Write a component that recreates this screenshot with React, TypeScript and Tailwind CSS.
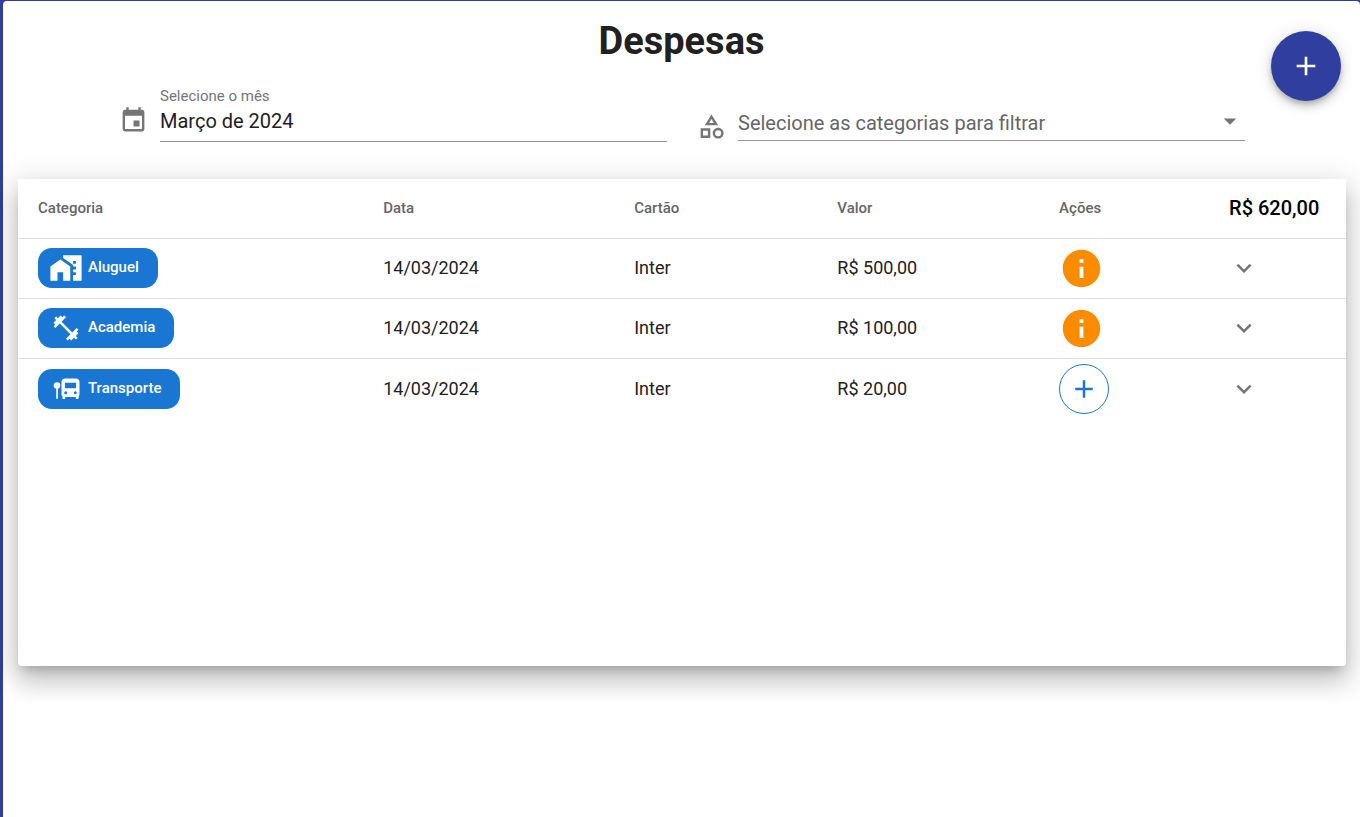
import { useState } from 'react';
import type { ComponentType } from 'react';
import {
  MdAdd,
  MdArrowDropDown,
  MdEvent,
  MdExpandMore,
  MdFitnessCenter,
  MdHomeWork,
  MdInfo,
  MdOutlineCategory,
} from 'react-icons/md';

type IconProps = { className?: string };

function BusStopIcon({ className }: IconProps) {
  return (
    <svg viewBox="0 0 28 28" fill="currentColor" className={className} aria-hidden="true">
      <circle cx="5" cy="10.6" r="3.3" />
      <path d="M4.2 12h1.700v11.800H4.200z" />
      <path
        fillRule="evenodd"
        d="M13.200 3.400h10.600c2.300 0 3.700 1.300 3.700 3.400v12.700c0 .8-.4 1.500-.9 2v1.500c0 .6-.4 1-1 1h-.8c-.6 0-1-.4-1-1v-1H13.200v1c0 .6-.4 1-1 1h-.8c-.6 0-1-.4-1-1v-1.500c-.6-.5-.9-1.200-.9-2V6.800c0-2.100 1.400-3.400 3.700-3.400zM12.900 7.800v5.400h11.200V7.800zM13.700 16.200a1.500 1.500 0 1 0 0 3 1.500 1.500 0 0 0 0-3zM23.300 16.200a1.500 1.500 0 1 0 0 3 1.500 1.500 0 0 0 0-3z"
      />
    </svg>
  );
}

type Expense = {
  category: string;
  icon: ComponentType<IconProps>;
  iconClass: string;
  date: string;
  card: string;
  value: string;
  hasDetails: boolean;
};

const expenses: Expense[] = [
  { category: 'Aluguel', icon: MdHomeWork, iconClass: 'size-[34px]', date: '14/03/2024', card: 'Inter', value: 'R$ 500,00', hasDetails: true },
  { category: 'Academia', icon: MdFitnessCenter, iconClass: 'size-[30px]', date: '14/03/2024', card: 'Inter', value: 'R$ 100,00', hasDetails: true },
  { category: 'Transporte', icon: BusStopIcon, iconClass: 'size-7', date: '14/03/2024', card: 'Inter', value: 'R$ 20,00', hasDetails: false },
];

function ExpenseRow({ expense }: { expense: Expense }) {
  const Icon = expense.icon;
  return (
    <tr className="h-[60px] border-b border-[#e0e0e0] last:h-[61px] last:border-b-0">
      <td className="pl-5">
        <span className="inline-flex h-10 items-center gap-[5px] rounded-[14px] bg-[#1976d2] pr-[19px] pl-[11px] align-middle text-[15px] font-medium text-white">
          <span className="flex w-[34px] justify-center">
            <Icon className={expense.iconClass} />
          </span>
          {expense.category}
        </span>
      </td>
      <td>{expense.date}</td>
      <td>{expense.card}</td>
      <td>{expense.value}</td>
      <td>
        {expense.hasDetails ? (
          <button type="button" aria-label="Detalhes" className="flex size-[45px] items-center justify-center text-[#fb8c00]">
            <MdInfo className="size-[45px]" />
          </button>
        ) : (
          <button
            type="button"
            aria-label="Adicionar"
            className="flex size-[50px] items-center justify-center rounded-full border border-[#1976d2] text-[#1976d2]"
          >
            <MdAdd className="size-[30px]" />
          </button>
        )}
      </td>
      <td>
        <button type="button" aria-label="Expandir" className="flex size-[30px] items-center justify-center text-[#757575]">
          <MdExpandMore className="size-[30px]" />
        </button>
      </td>
    </tr>
  );
}

export default function App() {
  const [month, setMonth] = useState('Março de 2024');

  return (
    <div className="min-h-screen bg-[#303f9f] pt-px pl-[3px] font-['Roboto',sans-serif] text-[#212121]">
      <main className="relative min-h-[calc(100vh-1px)] rounded-t bg-white">
        <h1 className="pt-4 text-center text-[38px] leading-[49px] font-bold">Despesas</h1>
        <button
          type="button"
          aria-label="Nova despesa"
          className="absolute top-[30px] right-[19px] flex size-[70px] items-center justify-center rounded-full bg-[#303f9f] text-white shadow-[0_3px_5px_-1px_rgba(0,0,0,0.2),0_6px_10px_0_rgba(0,0,0,0.14),0_1px_18px_0_rgba(0,0,0,0.12)]"
        >
          <MdAdd className="size-8" />
        </button>

        <form className="grid grid-cols-2 items-start gap-[30px] pt-5 pr-[115px] pl-[116px]">
          <div className="flex gap-3">
            <MdEvent className="mt-5 size-[29px] shrink-0 text-[#757575]" />
            <div className="flex min-w-0 flex-1 flex-col border-b border-[#949494]">
              <label htmlFor="month" className="text-[15px] leading-5 text-[#757575]">
                Selecione o mês
              </label>
              <input
                id="month"
                value={month}
                onChange={(event) => setMonth(event.target.value)}
                className="h-[35px] w-full bg-transparent pb-1.5 text-xl outline-none"
              />
            </div>
          </div>
          <div className="flex gap-3 pt-5">
            <MdOutlineCategory className="mt-[6px] size-[29px] shrink-0 text-[#757575]" />
            <div className="relative min-w-0 flex-1 border-b border-[#949494]">
              <select
                aria-label="Selecione as categorias para filtrar"
                defaultValue=""
                className="h-[33px] w-full appearance-none bg-transparent text-xl text-[#666666] outline-none"
              >
                <option value="">Selecione as categorias para filtrar</option>
                <option>Aluguel</option>
                <option>Academia</option>
                <option>Transporte</option>
              </select>
              <MdArrowDropDown className="pointer-events-none absolute top-0 right-0 size-[30px] text-[#757575]" />
            </div>
          </div>
        </form>

        <section className="mt-[37px] mr-3.5 ml-[15px] min-h-[487px] rounded-b bg-white shadow-[0_8px_10px_-5px_rgba(0,0,0,0.2),0_16px_24px_2px_rgba(0,0,0,0.14),0_6px_30px_5px_rgba(0,0,0,0.12)]">
          <table className="w-full table-fixed text-left text-lg">
            <thead>
              <tr className="h-[59px] border-b border-[#e0e0e0] text-[15px] text-[#666666]">
                <th className="w-[27.5%] pl-5 font-medium">Categoria</th>
                <th className="w-[18.9%] font-medium">Data</th>
                <th className="w-[15.3%] font-medium">Cartão</th>
                <th className="w-[16.7%] font-medium">Valor</th>
                <th className="w-[12.8%] font-medium">Ações</th>
                <th className="text-xl font-medium whitespace-nowrap text-black">R$ 620,00</th>
              </tr>
            </thead>
            <tbody>
              {expenses.map((expense) => (
                <ExpenseRow key={expense.category} expense={expense} />
              ))}
            </tbody>
          </table>
        </section>
      </main>
    </div>
  );
}
